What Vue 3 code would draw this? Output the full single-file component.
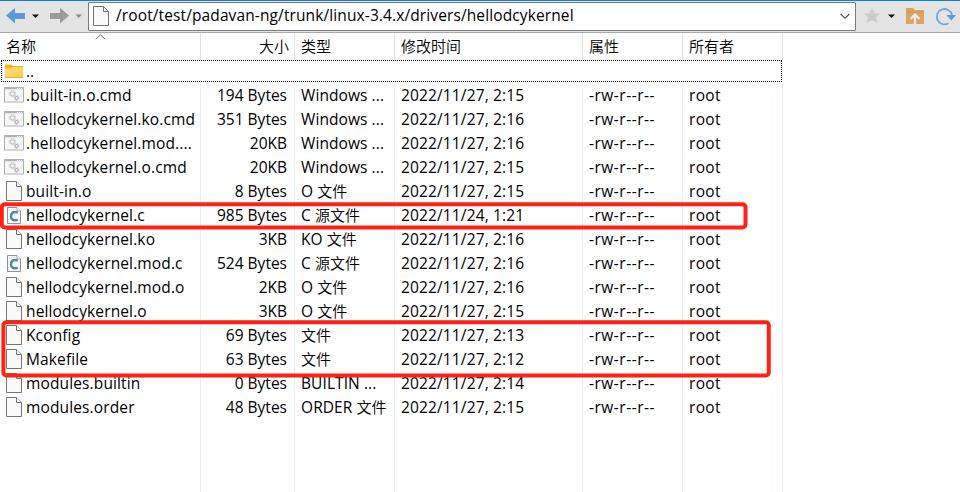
<script setup>
const columns = [
  { key: 'name', label: '名称' },
  { key: 'size', label: '大小' },
  { key: 'type', label: '类型' },
  { key: 'date', label: '修改时间' },
  { key: 'attr', label: '属性' },
  { key: 'owner', label: '所有者' },
]

const files = [
  ['cmd', '.built-in.o.cmd', '194 Bytes', 'Windows ...', '', '2022/11/27, 2:15'],
  ['cmd', '.hellodcykernel.ko.cmd', '351 Bytes', 'Windows ...', '', '2022/11/27, 2:16'],
  ['cmd', '.hellodcykernel.mod....', '20KB', 'Windows ...', '', '2022/11/27, 2:16'],
  ['cmd', '.hellodcykernel.o.cmd', '20KB', 'Windows ...', '', '2022/11/27, 2:15'],
  ['file', 'built-in.o', '8 Bytes', 'O ', '文件', '2022/11/27, 2:15'],
  ['c', 'hellodcykernel.c', '985 Bytes', 'C ', '源文件', '2022/11/24, 1:21'],
  ['file', 'hellodcykernel.ko', '3KB', 'KO ', '文件', '2022/11/27, 2:16'],
  ['c', 'hellodcykernel.mod.c', '524 Bytes', 'C ', '源文件', '2022/11/27, 2:16'],
  ['file', 'hellodcykernel.mod.o', '2KB', 'O ', '文件', '2022/11/27, 2:16'],
  ['file', 'hellodcykernel.o', '3KB', 'O ', '文件', '2022/11/27, 2:15'],
  ['file', 'Kconfig', '69 Bytes', '', '文件', '2022/11/27, 2:13'],
  ['file', 'Makefile', '63 Bytes', '', '文件', '2022/11/27, 2:12'],
  ['file', 'modules.builtin', '0 Bytes', 'BUILTIN ...', '', '2022/11/27, 2:14'],
  ['file', 'modules.order', '48 Bytes', 'ORDER ', '文件', '2022/11/27, 2:15'],
]
</script>

<template>
  <div class="window">
    <div class="toolbar">
      <svg class="nav" width="88" height="30" viewBox="0 0 88 30">
        <path d="M6 14.5 L15 7 V12 H25 V18 H15 V22.5Z" fill="#5b9bd5" />
        <path d="M32 13.5 H39 L35.5 17Z" fill="#111" />
        <path d="M69 14.5 L60 7 V12 H50 V18 H60 V22.5Z" fill="#9b9b9b" />
        <path d="M75.500 13.500 H82 L78.700 17Z" fill="#8a8a8a" />
      </svg>
      <div class="address">
        <svg class="page" width="18" height="22" viewBox="0 0 18 22">
          <path d="M1.500 1.500 H11.500 L16.500 6.500 V20.500 H1.500Z M11.500 1.500 V6.500 H16.500" fill="#fafafa" stroke="#747474" />
        </svg>
        <span class="path">/root/test/padavan-ng/trunk/linux-3.4.x/drivers/hellodcykernel</span>
        <svg class="chevron" width="10" height="7" viewBox="0 0 10 7"><path d="M.7 1 L5 5.300 L9.300 1" fill="none" stroke="#444" stroke-width="1.100" /></svg>
      </div>
      <svg width="104" height="30" viewBox="856 1 104 30">
        <path d="M872 8 L874.300 13.200 L880 13.700 L875.800 17.300 L877.200 23 L872 20 L866.800 23 L868.200 17.300 L864 13.700 L869.700 13.200Z" fill="#cdcdcd" />
        <path d="M888 14.500 H895 L891.500 18Z" fill="#111" />
        <path d="M906 8 H913 L915 10 H924 V24 H906Z" fill="#d9a566" />
        <path d="M906.500 12 H923.500" stroke="#cb9654" />
        <path d="M915 24 V16 M910.500 19 L915 14.500 L919.500 19" fill="none" stroke="#f3eee8" stroke-width="2.200" />
        <path d="M948.500 23.300 A7.700 7.700 0 1 1 952 15" fill="none" stroke="#6fa8dc" stroke-width="1.800" />
        <path d="M946.500 15 H956 L951.300 20.500Z" fill="#5b9bd5" />
      </svg>
    </div>

    <div class="listing">
      <div class="grid header">
        <div v-for="col in columns" :key="col.key" class="cell cjk" :class="col.key">{{ col.label }}</div>
        <svg class="sort" width="11" height="6" viewBox="0 0 11 6"><path d="M.8 5.200 L5.500 .8 L10.200 5.200" fill="none" stroke="#666" /></svg>
      </div>
      <div class="parent">
        <svg width="18" height="15" viewBox="0 0 18 15">
          <defs>
            <linearGradient id="folder" x1="0" y1="0" x2="1" y2="1">
              <stop offset="0" stop-color="#ffe28a" />
              <stop offset="1" stop-color="#ffca3d" />
            </linearGradient>
          </defs>
          <path d="M0 .5 H6.500 L8 2 H18 V13.500 H0Z" fill="#f6b718" />
          <path d="M0 4.500 H6 L8 3 H18 V13.500 H0Z" fill="url(#folder)" />
          <path d="M0 13.500 H18" stroke="#e9b43a" />
        </svg>
        <span>..</span>
      </div>
      <div class="rows">
        <div v-for="f in files" :key="f[1]" class="grid row">
          <div class="cell name">
            <svg v-if="f[0] === 'cmd'" class="icon" width="22" height="22" viewBox="0 0 22 22">
              <rect x=".5" y="3.500" width="19" height="14.500" fill="#f8f8f8" stroke="#b0b0b0" />
              <path d="M0 4.200 H20" stroke="#b4b4b4" stroke-width="2" />
              <path d="M13 4.500 H19" stroke="#fff" stroke-dasharray="1 1" />
              <circle cx="8.500" cy="9.700" r="2.100" fill="none" stroke="#c6cbd0" stroke-width="1.300" />
              <circle cx="8.500" cy="9.700" r="3.300" fill="none" stroke="#c6cbd0" stroke-width="1" stroke-dasharray="1.300 1.290" />
              <circle cx="12.700" cy="14" r="1.500" fill="none" stroke="#b0b4b7" stroke-width="1.200" />
              <circle cx="12.700" cy="14" r="2.500" fill="none" stroke="#b0b4b7" stroke-width=".8" stroke-dasharray="1 .96" />
            </svg>
            <svg v-else-if="f[0] === 'file'" class="icon" width="22" height="22" viewBox="0 0 22 22">
              <path d="M2.500 1.500 H12.500 L17.500 6.500 V20.500 H2.500Z" fill="#fafafa" stroke="#747474" />
              <path d="M12.500 1.500 V6.500 H17.500" fill="#fff" stroke="#747474" />
            </svg>
            <svg v-else class="icon" width="22" height="22" viewBox="0 0 22 22">
              <path d="M3.500 3.500 H13 L16.500 7 V19.500 H3.500Z" fill="#fafafa" stroke="#929292" />
              <path d="M13 3.500 V7 H16.500" fill="#fff" stroke="#a8a8a8" />
              <path d="M13.800 8.700 C10.500 7.200 7 8.500 7 12.200 C7 15.900 10.500 17.200 13.800 15.700" fill="none" stroke="#4b8fae" stroke-width="2.500" />
            </svg>
            <span>{{ f[1] }}</span>
          </div>
          <div class="cell size">{{ f[2] }}</div>
          <div class="cell type">{{ f[3] }}<span class="cjk">{{ f[4] }}</span></div>
          <div class="cell date">{{ f[5] }}</div>
          <div class="cell attr">-rw-r--r--</div>
          <div class="cell owner">root</div>
        </div>
      </div>
      <div class="grid filler"><div v-for="col in columns" :key="col.key" class="cell"></div></div>
    </div>

    <svg class="marks" width="960" height="492" viewBox="0 0 960 492">
      <rect x="1.800" y="204.300" width="743.700" height="23.200" rx="3" />
      <rect x="3.400" y="322.300" width="765.400" height="53.200" rx="3" />
    </svg>
  </div>
</template>

<style>
body {
  background: #fff;
  overflow: hidden;
}
</style>

<style scoped>
.window {
  position: relative;
  display: flex;
  flex-direction: column;
  box-sizing: border-box;
  width: 960px;
  height: 492px;
  overflow: hidden;
  background: #fff;
  color: #000;
  font: 15.5px 'Open Sans', 'Noto Sans CJK SC', sans-serif;
}
.toolbar {
  box-sizing: border-box;
  flex: none;
  display: flex;
  height: 33px;
  background: #e4e4e4;
  border-top: 1px solid #0b84d8;
  border-bottom: 1px solid #aaa;
}
.address {
  box-sizing: border-box;
  display: flex;
  align-items: center;
  width: 768px;
  height: 29px;
  margin-top: 1px;
  padding: 0 5px 0 3px;
  border: 1px solid #7a7a7a;
  border-radius: 1px;
  background: #fff;
}
.page {
  margin-bottom: 1px;
}
.path {
  flex: 1;
  margin-left: 6px;
  padding-bottom: 2px;
  line-height: 25px;
  letter-spacing: 0.115px;
  white-space: pre;
}
.listing {
  flex: 1;
  display: flex;
  flex-direction: column;
}
.grid {
  display: grid;
  grid-template-columns: 201px 94px 100px 188px 100px 100px;
  width: 783px;
}
.cell {
  box-sizing: border-box;
  padding-left: 6px;
  border-right: 1px solid #e6f0fc;
  white-space: pre;
  overflow: hidden;
}
.header {
  position: relative;
  height: 27px;
}
.header .cell {
  border-color: #e3e3e3;
  height: 27px;
  line-height: 25px;
}
.sort {
  position: absolute;
  left: 95px;
  top: 1px;
}
.cjk {
  font-family: 'Noto Sans CJK SC', sans-serif;
  font-size: 15px;
  font-weight: 350;
  letter-spacing: 0;
}
.cell.size {
  padding: 0 7px 0 0;
  text-align: right;
}
.header .cell.size {
  padding-right: 5px;
}
.parent {
  box-sizing: border-box;
  display: flex;
  align-items: center;
  width: 781px;
  height: 22px;
  margin: 0 0 2px 1px;
  padding-left: 4px;
  outline: 1px dotted #000;
  outline-offset: -1px;
}
.parent span {
  margin-left: 3px;
}
.row {
  height: 24px;
  line-height: 22px;
}
.row .cell {
  height: 24px;
}
.row .name {
  display: flex;
  align-items: flex-start;
  padding-left: 4px;
  letter-spacing: 0.13px;
}
.row .type {
  letter-spacing: 0.08px;
}
.row .date {
  letter-spacing: 0.14px;
}
.row .attr {
  letter-spacing: 0.5px;
}
.row .owner {
  letter-spacing: 0.3px;
}
.icon {
  flex: none;
}
.filler {
  flex: 1;
}
.marks {
  position: absolute;
  left: 0;
  top: 0;
}
.marks rect {
  fill: none;
  stroke: #ff2114;
  stroke-width: 4;
}
</style>
